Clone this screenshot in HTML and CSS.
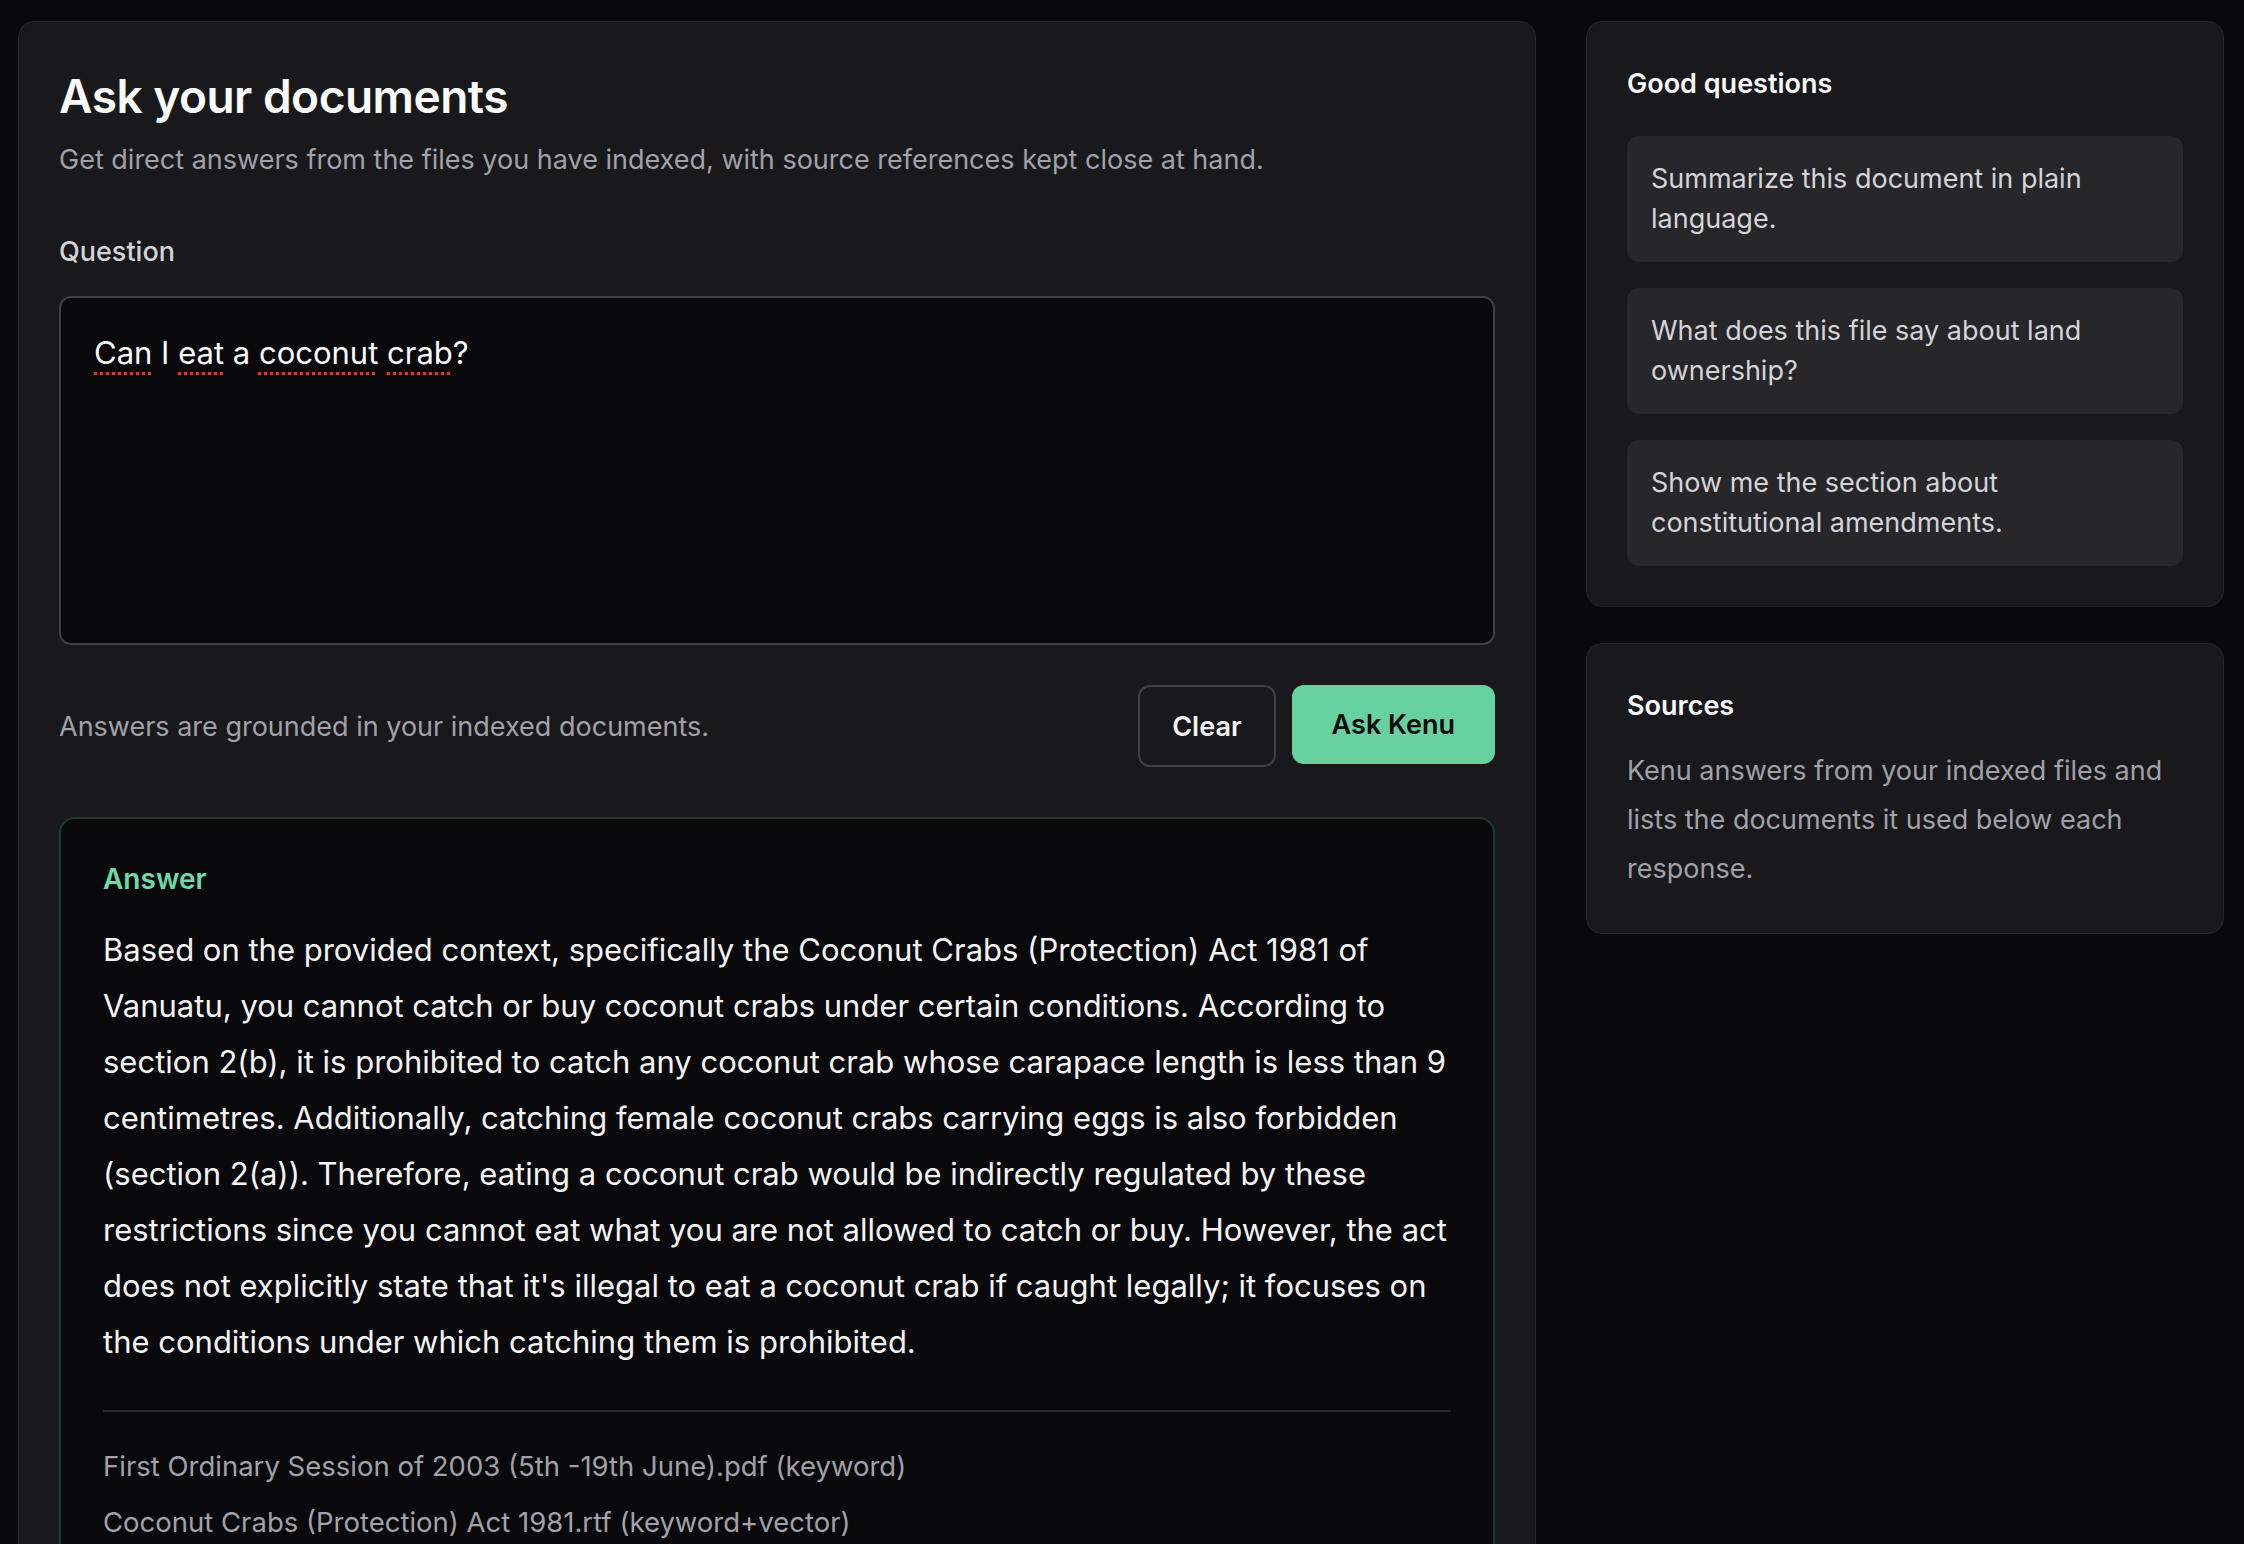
FILE: index.html
```html
<!DOCTYPE html>
<html lang="en">
<head>
  <meta charset="UTF-8" />
  <meta name="viewport" content="width=device-width, initial-scale=1.0"/>
  <title>Kenu · Ask your documents</title>
  <link rel="stylesheet" href="styles.css">
</head>
<body>
  <div class="layout">
    <main class="panel ask">
      <h1>Ask your documents</h1>
      <p class="lead">Get direct answers from the files you have indexed, with source references kept close at hand.</p>

      <label class="field-label" for="question">Question</label>
      <div class="question" id="question" contenteditable="true" spellcheck="false"><span class="typo">Can</span> I <span class="typo">eat</span> a <span class="typo">coconut</span> <span class="typo">crab</span>?</div>

      <div class="actions">
        <p class="hint">Answers are grounded in your indexed documents.</p>
        <div class="buttons">
          <button class="btn btn-ghost">Clear</button>
          <button class="btn btn-primary">Ask Kenu</button>
        </div>
      </div>

      <section class="answer">
        <h3>Answer</h3>
        <p class="answer-text">Based on the provided context, specifically the Coconut Crabs (Protection) Act 1981 of Vanuatu, you cannot catch or buy coconut crabs under certain conditions. According to section 2(b), it is prohibited to catch any coconut crab whose carapace length is less than 9 centimetres. Additionally, catching female coconut crabs carrying eggs is also forbidden (section 2(a)). Therefore, eating a coconut crab would be indirectly regulated by these restrictions since you cannot eat what you are not allowed to catch or buy. However, the act does not explicitly state that it's illegal to eat a coconut crab if caught legally; it focuses on the conditions under which catching them is prohibited.</p>
        <ul class="sources">
          <li>First Ordinary Session of 2003 (5th -19th June).pdf (keyword)</li>
          <li>Coconut Crabs (Protection) Act 1981.rtf (keyword+vector)</li>
        </ul>
      </section>
    </main>

    <aside class="side">
      <section class="panel side-card">
        <h2>Good questions</h2>
        <div class="suggestions">
          <button class="suggestion">Summarize this document in plain language.</button>
          <button class="suggestion">What does this file say about land ownership?</button>
          <button class="suggestion">Show me the section about constitutional amendments.</button>
        </div>
      </section>

      <section class="panel side-card">
        <h2>Sources</h2>
        <p class="side-text">Kenu answers from your indexed files and lists the documents it used below each response.</p>
      </section>
    </aside>
  </div>
</body>
</html>
```

FILE: styles.css
```css
* {
  box-sizing: border-box;
}
body {
  font-family: Inter, "Noto Sans", sans-serif;
  background: #09090b;
  color: #f4f4f5;
  margin: 0;
  padding: 21px 20px 40px 18px;
}
.layout {
  display: grid;
  grid-template-columns: minmax(0, 1fr) 638px;
  gap: 50px;
  align-items: start;
}
.panel {
  background: #19191c;
  border: 1px solid #27272a;
  border-radius: 16px;
}
.ask {
  padding: 46px 40px 40px;
}
h1 {
  margin: 0;
  font-size: 46px;
  line-height: 56px;
  font-weight: 600;
  letter-spacing: -0.5px;
  color: #fafafa;
}
.lead {
  margin: 18px 0 0;
  font-size: 27px;
  line-height: 36px;
  color: #a1a1aa;
}
.field-label {
  display: block;
  margin-top: 56px;
  font-size: 27px;
  line-height: 36px;
  font-weight: 500;
  color: #d4d4d8;
}
.question {
  margin-top: 26px;
  height: 349px;
  padding: 33px 33px 24px;
  background: #09090b;
  border: 2px solid #3f3f46;
  border-radius: 12px;
  font-size: 31px;
  line-height: 44px;
  color: #fafafa;
  outline: none;
}
.typo {
  text-decoration: underline dotted #e5362b;
  text-decoration-thickness: 3px;
  text-underline-offset: 8px;
}
.actions {
  display: flex;
  align-items: center;
  justify-content: space-between;
  margin-top: 40px;
}
.hint {
  margin: 0;
  font-size: 27px;
  color: #a1a1aa;
}
.buttons {
  display: flex;
  gap: 16px;
}
.btn {
  font-family: inherit;
  font-size: 27px;
  font-weight: 600;
  height: 82px;
  padding: 0 36px;
  border-radius: 12px;
  cursor: pointer;
}
.btn-ghost {
  background: #19191c;
  color: #f4f4f5;
  border: 2px solid #3f3f46;
  padding: 0 32px;
}
.btn-primary {
  background: #68d1a0;
  color: #0b0b0d;
  border: none;
  height: 79px;
  padding: 0 40px;
}
.answer {
  margin-top: 50px;
  padding: 42px 42px 40px;
  background: #09090b;
  border: 2px solid #1d3a2f;
  border-radius: 16px;
}
.answer h3 {
  margin: 0;
  font-size: 28px;
  line-height: 36px;
  font-weight: 600;
  color: #6fd9a8;
}
.answer-text {
  margin: 25px 0 0;
  font-size: 31px;
  line-height: 56px;
  color: #f4f4f5;
}
.sources {
  list-style: none;
  margin: 40px 0 0;
  padding: 26px 0 0;
  border-top: 2px solid #27272a;
}
.sources li {
  font-size: 27.5px;
  line-height: 56px;
  color: #a1a1aa;
}
.side {
  display: flex;
  flex-direction: column;
  gap: 36px;
}
.side-card {
  padding: 44px 40px 40px;
}
.side-card h2 {
  margin: 0;
  font-size: 27px;
  line-height: 35px;
  font-weight: 600;
  color: #fafafa;
}
.suggestions {
  display: flex;
  flex-direction: column;
  gap: 26px;
  margin-top: 35px;
}
.suggestion {
  text-align: left;
  font-family: inherit;
  font-size: 27px;
  line-height: 40px;
  color: #d4d4d8;
  background: #27272a;
  border: none;
  border-radius: 12px;
  padding: 23px 24px;
  cursor: pointer;
}
.side-text {
  margin: 23px 0 0;
  font-size: 27px;
  line-height: 49px;
  color: #a1a1aa;
}
```
